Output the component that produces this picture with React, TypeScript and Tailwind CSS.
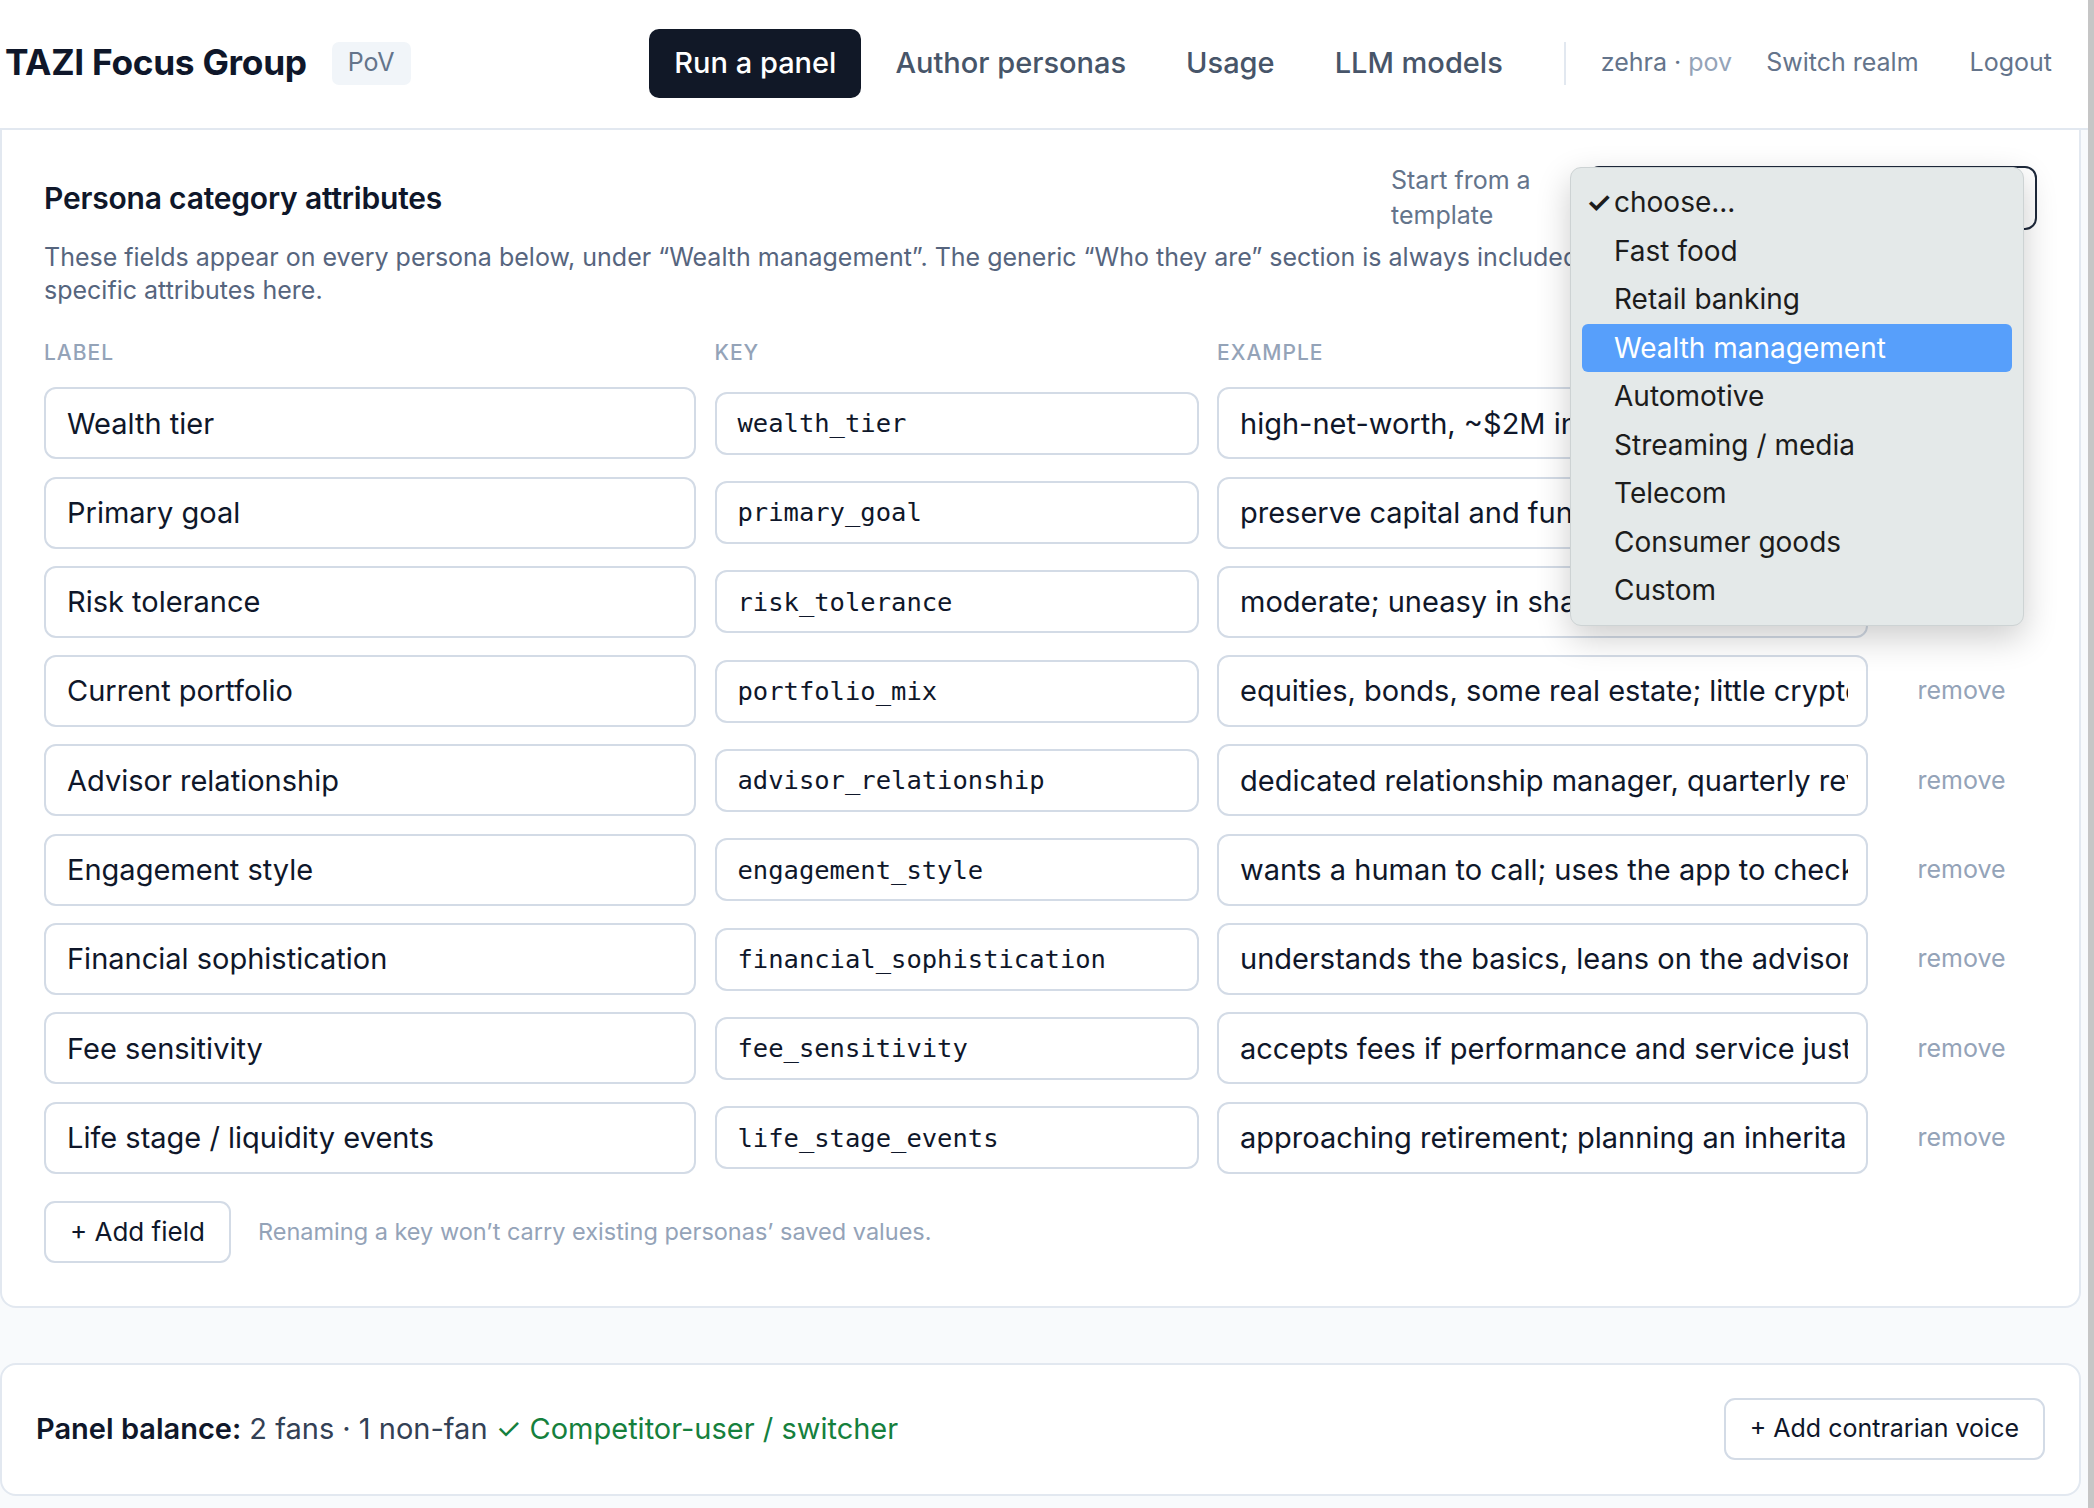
import React from 'react';

interface Field {
  label: string;
  key: string;
  example: string;
}

const fields: Field[] = [
  { label: 'Wealth tier', key: 'wealth_tier', example: 'high-net-worth, ~$2M investable assets' },
  { label: 'Primary goal', key: 'primary_goal', example: 'preserve capital and fund retirement' },
  { label: 'Risk tolerance', key: 'risk_tolerance', example: 'moderate; uneasy in sharp drawdowns' },
  { label: 'Current portfolio', key: 'portfolio_mix', example: 'equities, bonds, some real estate; little crypto' },
  { label: 'Advisor relationship', key: 'advisor_relationship', example: 'dedicated relationship manager, quarterly reviews' },
  { label: 'Engagement style', key: 'engagement_style', example: 'wants a human to call; uses the app to check balances' },
  { label: 'Financial sophistication', key: 'financial_sophistication', example: 'understands the basics, leans on the advisor' },
  { label: 'Fee sensitivity', key: 'fee_sensitivity', example: 'accepts fees if performance and service justify them' },
  { label: 'Life stage / liquidity events', key: 'life_stage_events', example: 'approaching retirement; planning an inheritance' },
];

const templates = [
  'Fast food',
  'Retail banking',
  'Wealth management',
  'Automotive',
  'Streaming / media',
  'Telecom',
  'Consumer goods',
  'Custom',
];

const Header = () => (
  <header className="h-[130px] shrink-0 bg-white border-b-2 border-[#e2e8f0] flex items-center pl-[5px] pr-[36px] pb-[2px]">
    <div className="text-[35.3px] font-bold text-[#0f172a] tracking-[-0.3px]">TAZI Focus Group</div>
    <span className="ml-[25px] h-[43px] px-[16px] flex items-center rounded-[7px] bg-[#f1f5f9] text-[25px] text-[#64748b]">
      PoV
    </span>
    <nav className="ml-auto flex items-center gap-[8px]">
      <button className="h-[69px] px-[25px] rounded-[10px] bg-[#111827] text-white text-[29px] font-medium">
        Run a panel
      </button>
      <a className="px-[26px] text-[29px] font-medium text-[#475569]">Author personas</a>
      <a className="px-[26px] text-[29px] font-medium text-[#475569]">Usage</a>
      <a className="px-[26px] text-[29px] font-medium text-[#475569]">LLM models</a>
    </nav>
    <div className="ml-[35px] h-[43px] w-[2px] bg-[#e2e8f0]" />
    <div className="ml-[35px] text-[25px] text-[#64748b]">
      zehra · <span className="text-[#94a3b8]">pov</span>
    </div>
    <a className="ml-[34px] text-[25px] text-[#64748b]">Switch realm</a>
    <a className="ml-[51px] text-[25px] text-[#64748b]">Logout</a>
  </header>
);

const inputBox = 'flex items-center border-2 border-[#d3dbe6] rounded-[12px] bg-white overflow-hidden whitespace-nowrap';

const FieldRow = ({ f }: { f: Field }) => (
  <>
    <div className={`${inputBox} h-[72px] px-[21px] text-[29px] text-[#0f172a]`}>{f.label}</div>
    <div className="flex items-center">
      <div className={`${inputBox} w-full h-[63px] px-[21px] text-[25.5px] text-[#0f172a] font-['DejaVu_Sans_Mono',monospace]`}>
        {f.key}
      </div>
    </div>
    <div className={`${inputBox} h-[72px] pl-[21px] pr-[18px]`}>
      <span className="block overflow-hidden text-[29px] text-[#0f172a]">{f.example}</span>
    </div>
    <div className="flex items-center pl-[31px] text-[25px] text-[#94a3b8]">remove</div>
  </>
);

const TemplateMenu = () => (
  <div className="absolute left-[1568px] top-[37px] w-[454px] py-[10px] rounded-[11px] bg-[#e4e9e9] border border-[#cdd3d4] shadow-[0_12px_34px_rgba(0,0,0,0.2)] z-10">
    <div className="relative h-[48.5px] flex items-center pl-[43px] text-[28px] text-[#1c1c1c]">
      <span className="absolute left-[15px] text-[29px] font-semibold">✓</span>
      choose...
    </div>
    {templates.map((t) =>
      t === 'Wealth management' ? (
        <div key={t} className="h-[48.5px] mx-[11px] rounded-[6px] bg-[#579ffb] flex items-center pl-[32px] text-[28px] text-white">
          {t}
        </div>
      ) : (
        <div key={t} className="h-[48.5px] flex items-center pl-[43px] text-[28px] text-[#1c1c1c]">
          {t}
        </div>
      )
    )}
  </div>
);

export default function App() {
  return (
    <div className="flex w-[2094px] min-h-[1508px] bg-[#f8fafc] font-['Inter',sans-serif]">
      <div className="w-[2088px] flex flex-col">
        <Header />

        {/* Persona category attributes */}
        <div className="pr-[7px]">
          <section className="relative bg-white border-2 border-t-0 border-[#e2e8f0] rounded-b-[16px] pl-[42px] pr-[42px] pt-[33px] pb-[43px]">
            <div className="flex items-center justify-between h-[70px]">
              <h2 className="text-[30px] font-semibold text-[#0f172a] tracking-[-0.2px]">Persona category attributes</h2>
              <div className="flex items-center">
                <label className="w-[160px] text-[25px] leading-[35px] text-[#64748b]">Start from a template</label>
                <div className="ml-[36px] w-[450px] h-[64px] rounded-[12px] border-2 border-[#1e293b] flex items-center justify-end pr-[10px]">
                  <svg width="14" height="14" viewBox="0 0 14 14" fill="none" stroke="#64748b" strokeWidth="1.6">
                    <path d="M3 5l4 4 4-4" />
                  </svg>
                </div>
              </div>
            </div>
            <p className="mt-[8px] text-[25px] leading-[33px] text-[#56657e]">
              These fields appear on every persona below, under “Wealth management”. The generic “Who they are” section is always included; add category-
              <br />
              specific attributes here.
            </p>

            <div className="mt-[34px] grid grid-cols-[652px_484px_651px_1fr] gap-x-[18.5px] gap-y-[17.3px]">
              <div className="text-[21px] font-medium tracking-[1px] text-[#94a3b8] leading-[24px] mb-[5px]">LABEL</div>
              <div className="text-[21px] font-medium tracking-[1px] text-[#94a3b8] leading-[24px] mb-[5px]">KEY</div>
              <div className="text-[21px] font-medium tracking-[1px] text-[#94a3b8] leading-[24px] mb-[5px]">EXAMPLE</div>
              <div />
              {fields.map((f) => (
                <FieldRow key={f.key} f={f} />
              ))}
            </div>

            <div className="mt-[27px] flex items-center">
              <button className="h-[62px] px-[24px] rounded-[11px] border-2 border-[#d3dbe6] bg-white text-[26px] text-[#0f172a]">
                + Add field
              </button>
              <span className="ml-[27px] text-[23.5px] text-[#94a3b8]">
                Renaming a key won’t carry existing personas’ saved values.
              </span>
            </div>

            <TemplateMenu />
          </section>
        </div>

        {/* Panel balance */}
        <div className="pr-[7px] mt-[55px]">
          <section className="h-[133px] bg-white border-2 border-[#e2e8f0] rounded-[16px] px-[34px] flex items-center justify-between">
            <div className="text-[29px] text-[#334155]">
              <span className="font-semibold text-[#0f172a]">Panel balance:</span> 2 fans · 1 non-fan{' '}
              <span className="text-[#15803d]">✓ Competitor-user / switcher</span>
            </div>
            <button className="h-[62px] px-[24px] rounded-[11px] border-2 border-[#d3dbe6] bg-white text-[25px] text-[#0f172a]">
              + Add contrarian voice
            </button>
          </section>
        </div>
      </div>
      <div className="w-[6px] bg-[#c6c6c6]" />
    </div>
  );
}
